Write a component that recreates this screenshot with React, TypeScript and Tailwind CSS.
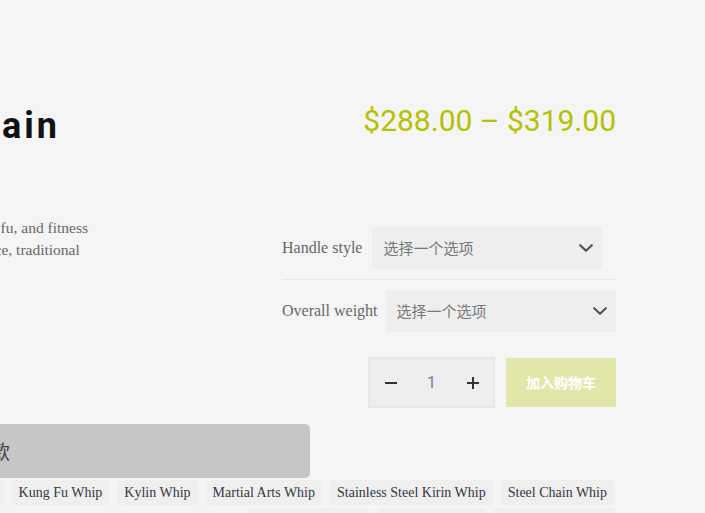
import { type ReactNode } from 'react';

const serif = "font-['Liberation_Serif','Noto_Serif',serif]";
const cjk = "font-['Noto_Sans_CJK_SC',sans-serif]";

function Chevron() {
    return (
        <svg width="14" height="8" viewBox="0 0 14 8" fill="none" className="shrink-0">
            <polyline points="1.2,1.2 7,6.8 12.8,1.2" stroke="#555" strokeWidth="2.2" strokeLinecap="round" strokeLinejoin="round" />
        </svg>
    );
}

function VariationRow({ label, bordered }: { label: string; bordered?: boolean }) {
    return (
        <div className={`flex items-center ${bordered ? 'gap-[10px] pb-[10px] border-b border-[#e6e6e6]' : 'gap-[8px] pt-[10px]'}`}>
            <span className={`${serif} text-[16px] text-[#666] whitespace-nowrap`}>{label}</span>
            <button className="flex items-center justify-between w-[230px] h-[42px] bg-[#eeeeee] pl-[11px] pr-[9px]">
                <span className={`${cjk} text-[15px] text-[#777]`}>选择一个选项</span>
                <Chevron />
            </button>
        </div>
    );
}

function Tag({ children }: { children: ReactNode }) {
    return (
        <a className={`${serif} h-[25px] flex items-center px-[7px] rounded-[4px] bg-[#efefef] text-[14px] text-[#363645] whitespace-nowrap`}>
            {children}
        </a>
    );
}

function App() {
    return (
        <div className="w-[705px] h-[513px] overflow-hidden bg-[#f5f5f5] pt-[102px]">
            <div className="ml-[-366px] w-[982px]">
                <div className="flex justify-between items-start">
                    {/* left column: title + short description, right edges pinned */}
                    <div className="w-[454px] flex flex-col items-end">
                        <h1 className="mr-[28px] mt-[3px] font-['Roboto',sans-serif] font-bold text-[36px] leading-[42px] tracking-[3px] text-[#111] whitespace-nowrap">
                            Steel Whip Chain
                        </h1>
                        <div className={`${serif} mt-[70px] text-[15.5px] leading-[22px] text-[#666] whitespace-nowrap`}>
                            <p>Suitable for martial arts, Kung fu, and fitness</p>
                            <p>enthusiasts, a stage performance, traditional</p>
                        </div>
                    </div>
                    <div className="w-[334px]">
                        <p className="text-right font-['Roboto',sans-serif] text-[30px] leading-[37px] text-[#b4c000]">
                            $288.00 – $319.00
                        </p>
                        <div className="mt-[88px]">
                            <VariationRow label="Handle style" bordered />
                            <VariationRow label="Overall weight" />
                        </div>
                        <div className="mt-[25px] flex justify-end items-center gap-[11px]">
                            <div className="flex items-center h-[51px] border-2 border-[#e7e7e7] bg-[#eeeeee]">
                                <button className="w-[41px] h-full flex items-center justify-center">
                                    <svg width="12" height="12" viewBox="0 0 12 12"><line x1="0" y1="6" x2="12" y2="6" stroke="#333" strokeWidth="2" /></svg>
                                </button>
                                <span className="w-[41px] text-center font-['Roboto',sans-serif] text-[16px] text-[#808080]">1</span>
                                <button className="w-[41px] h-full flex items-center justify-center">
                                    <svg width="12" height="12" viewBox="0 0 12 12"><line x1="0" y1="6" x2="12" y2="6" stroke="#333" strokeWidth="2" /><line x1="6" y1="0" x2="6" y2="12" stroke="#333" strokeWidth="2" /></svg>
                                </button>
                            </div>
                            <button className={`${cjk} w-[110px] h-[49px] bg-[#e1e6ab] text-white font-bold text-[14px]`}>
                                加入购物车
                            </button>
                        </div>
                    </div>
                </div>
                <button className={`${cjk} mt-[16px] w-[676px] h-[54px] rounded-[5px] bg-[#c6c6c6] text-[19px] text-[#444]`}>
                    立即付款
                </button>
                <div className="mt-[2px] mr-[2px] flex flex-col items-end gap-[3px]">
                    <div className="flex gap-[8px]">
                        <Tag>Chain Whip</Tag>
                        <Tag>Fitness Whip</Tag>
                        <Tag>Kung Fu Whip</Tag>
                        <Tag>Kylin Whip</Tag>
                        <Tag>Martial Arts Whip</Tag>
                        <Tag>Stainless Steel Kirin Whip</Tag>
                        <Tag>Steel Chain Whip</Tag>
                    </div>
                    <div className="flex gap-[8px]">
                        <Tag>Nine Section Whip</Tag>
                        <Tag>Iron Chain Whip</Tag>
                        <Tag>Performance Whip</Tag>
                    </div>
                </div>
            </div>
        </div>
    );
}

export default App;
